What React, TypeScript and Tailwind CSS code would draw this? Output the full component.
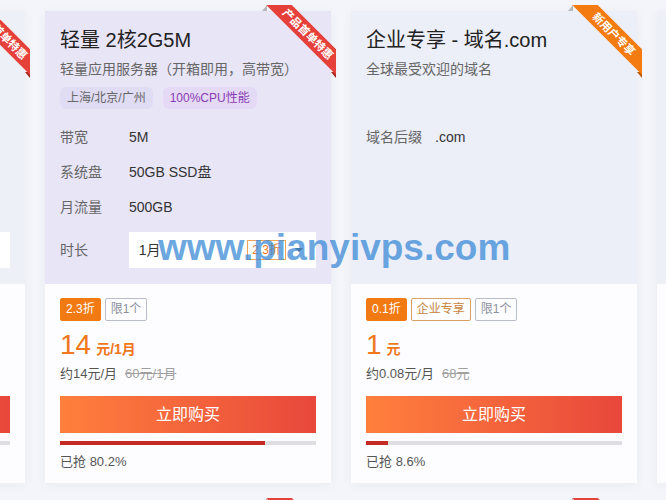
type Badge = { text: string; kind: "fill" | "gold" | "gray" };

type Product = {
  title: string;
  subtitle: string;
  tags?: { text: string; purple?: boolean }[];
  specs: [string, string][];
  duration?: boolean;
  badges: Badge[];
  price: string;
  unit: string;
  perMonth: string;
  original: string;
  sold: number;
  ribbon: string;
  ribbonColor: "red" | "orange";
  topBg: string;
};

const badgeClass = {
  fill: "border-[#f27a12] bg-[#f27a12] text-white",
  gold: "border-[#d9a066] text-[#c8843c]",
  gray: "border-[#b9bdc9] text-[#8c909b]",
};

function Ribbon({ text, color }: { text: string; color: "red" | "orange" }) {
  const bg = color === "red" ? "bg-[#e6403a]" : "bg-[#f47b10]";
  const fold = color === "red" ? "border-t-[#a82620]" : "border-t-[#b85606]";
  return (
    <>
      <div className="pointer-events-none absolute -right-[5px] -top-[6px] z-10 h-[74px] w-[74px] overflow-hidden">
        <div
          className={`absolute left-[-9px] top-[20px] h-[18px] w-[110px] rotate-45 text-center text-[11px] font-bold leading-[18px] text-white ${bg}`}
        >
          {text}
        </div>
      </div>
      {/* folds where the band wraps the card edge */}
      <div className={`absolute -right-[5px] top-[61px] h-0 w-0 border-l-[5px] border-t-[6px] border-l-transparent ${fold}`} />
      <div className={`absolute right-[64px] -top-[6px] h-0 w-0 border-b-[6px] border-l-[5px] border-b-[#00000040] border-l-transparent`} />
    </>
  );
}

function Card({ p }: { p: Product }) {
  return (
    <article className="relative flex w-[286px] shrink-0 flex-col bg-[#fdfdff] shadow-[0_2px_10px_rgba(60,70,120,0.05)]">
      <Ribbon text={p.ribbon} color={p.ribbonColor} />
      <div className={`flex h-[273px] flex-col px-[15px] pt-[15px] ${p.topBg}`}>
        <h4 className="text-[20px] leading-[28px] text-[#222]">{p.title}</h4>
        <p className="mt-[5px] text-[14px] leading-[20px] text-[#666]">{p.subtitle}</p>
        <div className="mt-[8px] flex h-[22px] gap-[10px]">
          {p.tags?.map((t) => (
            <span
              key={t.text}
              className={`rounded-[6px] px-[7px] text-[12px] leading-[22px] ${
                t.purple ? "bg-[#e5daf6] text-[#8a3cb4]" : "bg-[#e0dcf3] text-[#666]"
              }`}
            >
              {t.text}
            </span>
          ))}
        </div>
        <div className="mt-[18px] flex flex-col gap-[15px]">
          {p.specs.map(([k, v]) => (
            <div key={k} className="flex text-[14px] leading-[20px]">
              <span className="w-[69px] text-[#666]">{k}</span>
              <span className="text-[#333]">{v}</span>
            </div>
          ))}
          {p.duration && (
            <div className="flex items-center text-[14px]">
              <span className="w-[69px] text-[#666]">时长</span>
              <div className="flex h-[36px] w-[188px] items-center bg-white pl-[10px] pr-[12px]">
                <span className="flex-1 text-[#333]">1月</span>
                <span className="h-[20px] border border-[#f0a35a] px-[4px] text-[12px] leading-[18px] text-[#f07a18]">2.3折</span>
                <svg className="ml-[8px]" width="10" height="10" viewBox="0 0 10 10">
                  <path d="M1 3 L5 7 L9 3 Z" fill="#555" />
                </svg>
              </div>
            </div>
          )}
        </div>
      </div>
      <div className="flex flex-col px-[15px] pb-[12px] pt-[14px]">
        <div className="flex gap-[4px]">
          {p.badges.map((b) => (
            <span key={b.text} className={`h-[23px] rounded-[2px] border px-[5px] text-[12px] leading-[21px] ${badgeClass[b.kind]}`}>
              {b.text}
            </span>
          ))}
        </div>
        <div className="mt-[8px] flex items-baseline text-[#f0771c]">
          <span className="text-[28px] leading-[32px]">{p.price}</span>
          <span className="ml-[5px] text-[14px] font-bold">{p.unit}</span>
        </div>
        <div className="mt-[4px] flex gap-[8px] text-[13px] leading-[18px]">
          <span className="text-[#555]">{p.perMonth}</span>
          <span className="text-[#a0a0a0] line-through">{p.original}</span>
        </div>
        <button
          type="button"
          className="mt-[13px] h-[37px] w-full bg-gradient-to-r from-[#ff7f3c] to-[#e8473b] text-[16px] text-white"
        >
          立即购买
        </button>
        <div className="mt-[8px] h-[4px] w-full bg-[#dedee2]">
          <div className="h-full bg-[#c52b20]" style={{ width: `${p.sold}%` }} />
        </div>
        <span className="mt-[8px] text-[13px] leading-[18px] text-[#555]">已抢 {p.sold}%</span>
      </div>
    </article>
  );
}

const vps = (title: string, sold: number, topBg: string): Product => ({
  title,
  subtitle: "轻量应用服务器（开箱即用，高带宽）",
  tags: [{ text: "上海/北京/广州" }, { text: "100%CPU性能", purple: true }],
  specs: [
    ["带宽", "5M"],
    ["系统盘", "50GB SSD盘"],
    ["月流量", "500GB"],
  ],
  duration: true,
  badges: [
    { text: "2.3折", kind: "fill" },
    { text: "限1个", kind: "gray" },
  ],
  price: "14",
  unit: "元/1月",
  perMonth: "约14元/月",
  original: "60元/1月",
  sold,
  ribbon: "产品首单特惠",
  ribbonColor: "red",
  topBg,
});

const domain: Product = {
  title: "企业专享 - 域名.com",
  subtitle: "全球最受欢迎的域名",
  specs: [["域名后缀", ".com"]],
  badges: [
    { text: "0.1折", kind: "fill" },
    { text: "企业专享", kind: "gold" },
    { text: "限1个", kind: "gray" },
  ],
  price: "1",
  unit: "元",
  perMonth: "约0.08元/月",
  original: "68元",
  sold: 8.6,
  ribbon: "新用户专享",
  ribbonColor: "orange",
  topBg: "bg-[#eceef8]",
};

const row1: Product[] = [
  vps("轻量 2核4G6M", 62.4, "bg-[#eef0f8]"),
  vps("轻量 2核2G5M", 80.2, "bg-[#e8e5f7]"),
  domain,
  vps("轻量 4核8G12M", 45.1, "bg-[#eef0f8]"),
];

const row2: Product[] = row1.map((p) => ({ ...p, ribbonColor: "red" as const, topBg: "bg-[#eef0f8]" }));

export default function App() {
  return (
    <div className="relative h-[500px] w-[666px] overflow-hidden bg-[#f4f5fa] font-['Liberation_Sans','Noto_Sans_CJK_SC',sans-serif]">
      <div className="ml-[-261px] flex flex-col gap-[21px] pt-[11px]">
        <div className="flex gap-[20px]">
          {row1.map((p, i) => (
            <Card key={i} p={p} />
          ))}
        </div>
        <div className="flex gap-[20px]">
          {row2.map((p, i) => (
            <Card key={i} p={p} />
          ))}
        </div>
      </div>
      <div className="pointer-events-none absolute left-[158px] top-[229px] z-20 text-[37px] font-bold leading-[37px] text-[#3b8ad6]/75">
        www.pianyivps.com
      </div>
    </div>
  );
}
